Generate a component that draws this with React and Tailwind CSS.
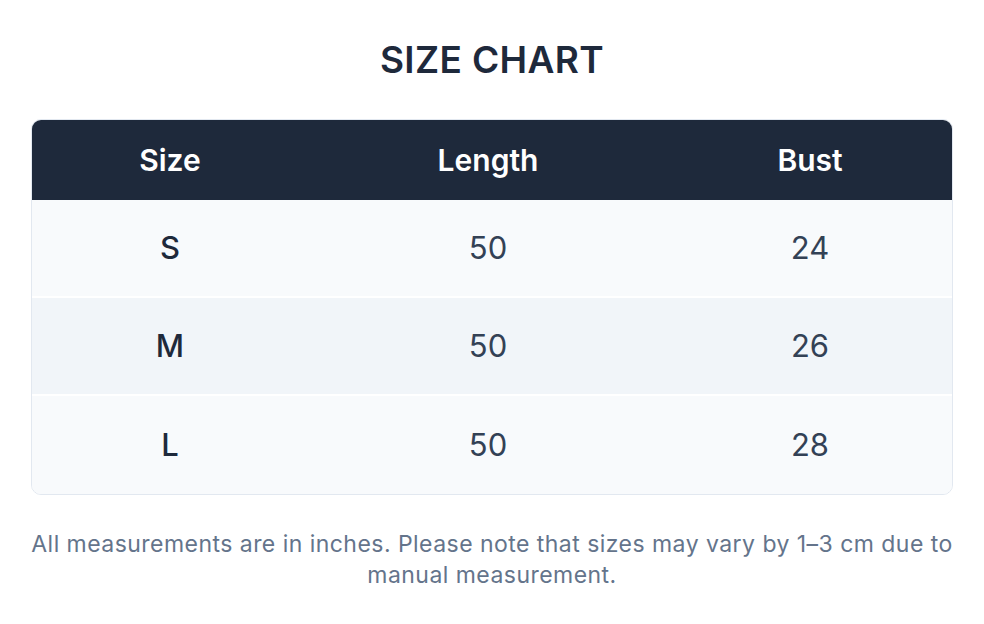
import React from 'react';

const rows = [
  { size: 'S', length: 50, bust: 24 },
  { size: 'M', length: 50, bust: 26 },
  { size: 'L', length: 50, bust: 28 },
];

const SizeChart = () => {
  return (
    <div className="min-h-screen bg-white font-['Inter',sans-serif]">
      <div className="w-[922px] mx-auto pt-[35px]">
        <h1 className="text-[37px] leading-[50px] font-semibold text-center text-[#1e293b] tracking-[0.01em]">
          SIZE CHART
        </h1>
        <div className="mt-[34px] border border-[#e2e8f0] rounded-[10px] overflow-hidden">
          <div className="grid grid-cols-[276px_360px_1fr] bg-[#1e293b] h-[80px] items-center text-white text-[30px] font-semibold text-center">
            <div>Size</div>
            <div>Length</div>
            <div>Bust</div>
          </div>
          {rows.map((r, i) => (
            <div
              key={r.size}
              className={
                'grid grid-cols-[276px_360px_1fr] h-[98px] items-center text-center text-[31px] ' +
                (i % 2 === 1 ? 'bg-[#f1f5f9] ' : 'bg-[#f8fafc] ') +
                (i < rows.length - 1 ? 'border-b-2 border-white' : '')
              }
            >
              <div className="font-medium text-[#1e293b]">{r.size}</div>
              <div className="text-[#334155]">{r.length}</div>
              <div className="text-[#334155]">{r.bust}</div>
            </div>
          ))}
        </div>
        <p className="mt-[34px] text-[23px] leading-[31px] tracking-[0.02em] text-center text-[#64748b]">
          All measurements are in inches. Please note that sizes may vary by 1–3 cm due to manual measurement.
        </p>
      </div>
    </div>
  );
};

export default SizeChart;
